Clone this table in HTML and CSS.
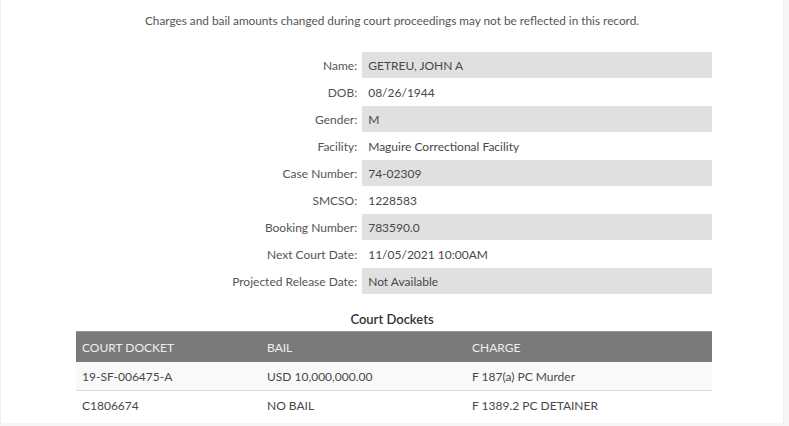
FILE: index.html
```html
<!DOCTYPE html>
<html lang="en">
<head>
	<meta charset="UTF-8">
	<title>Inmate Record</title>
<link rel="stylesheet" href="styles.css">
</head>
<body>
<div class="card">
	<p class="notice">Charges and bail amounts changed during court proceedings may not be reflected in this record.</p>

	<table class="details">
		<tr class="shade"><th>Name:</th><td>GETREU, JOHN A</td></tr>
		<tr><th>DOB:</th><td>08/26/1944</td></tr>
		<tr class="shade"><th>Gender:</th><td>M</td></tr>
		<tr><th>Facility:</th><td>Maguire Correctional Facility</td></tr>
		<tr class="shade"><th>Case Number:</th><td>74-02309</td></tr>
		<tr><th>SMCSO:</th><td>1228583</td></tr>
		<tr class="shade"><th>Booking Number:</th><td>783590.0</td></tr>
		<tr><th>Next Court Date:</th><td>11/05/2021 10:00AM</td></tr>
		<tr class="shade"><th>Projected Release Date:</th><td>Not Available</td></tr>
	</table>

	<h3 class="dockets-title">Court Dockets</h3>
	<table class="dockets">
		<thead>
			<tr><th class="c1">COURT DOCKET</th><th class="c2">BAIL</th><th>CHARGE</th></tr>
		</thead>
		<tbody>
			<tr class="odd"><td>19-SF-006475-A</td><td>USD 10,000,000.00</td><td>F 187(a) PC Murder</td></tr>
			<tr><td>C1806674</td><td>NO BAIL</td><td>F 1389.2 PC DETAINER</td></tr>
		</tbody>
	</table>
</div>
</body>
</html>
```

FILE: styles.css
```css
html, body{
	margin: 0;
	padding: 0;
}
body{
	background: #f6f6f6;
	font-family: Lato, "Open Sans", sans-serif;
	color: #444;
}
.card{
	width: 782px;
	height: 423px;
	margin-left: 1px;
	background: #fff;
	box-shadow: 0 0 3px rgba(0,0,0,.08);
	overflow: hidden;
}
.notice{
	margin: 0;
	padding-top: 13px;
	text-align: center;
	font-size: 11.8px;
	line-height: 16px;
	color: #555;
}

/* detail rows */
.details{
	width: 636px;
	margin: 22px 0 0 75px;
	border-collapse: separate;
	border-spacing: 0 1px;
	font-size: 12px;
}
.details th{
	width: 45%;
	height: 26px;
	padding: 0 5px 0 0;
	text-align: right;
	font-weight: normal;
	color: #555;
}
.details td{
	padding: 0 6px;
	color: #484848;
}
.details .shade td{
	background: #e0e0e0;
}

/* dockets */
.dockets-title{
	margin: 16px 0 4px;
	text-align: center;
	font-size: 13px;
	font-weight: 600;
	color: #333;
	line-height: 16px;
}
.dockets{
	width: 636px;
	margin-left: 75px;
	border-collapse: collapse;
	font-size: 12px;
}
.dockets th{
	height: 30px;
	padding: 0 6px;
	background: #7a7a7a;
	color: #eee;
	text-align: left;
	font-weight: normal;
	border-top: 1px solid #999;
}
.dockets .c1{ width: 173px; }
.dockets .c2{ width: 193px; }
.dockets td{
	height: 28px;
	padding: 0 6px;
	color: #484848;
}
.dockets .odd td{
	background: #f9f9f9;
	border-bottom: 1px solid #ddd;
}
```
